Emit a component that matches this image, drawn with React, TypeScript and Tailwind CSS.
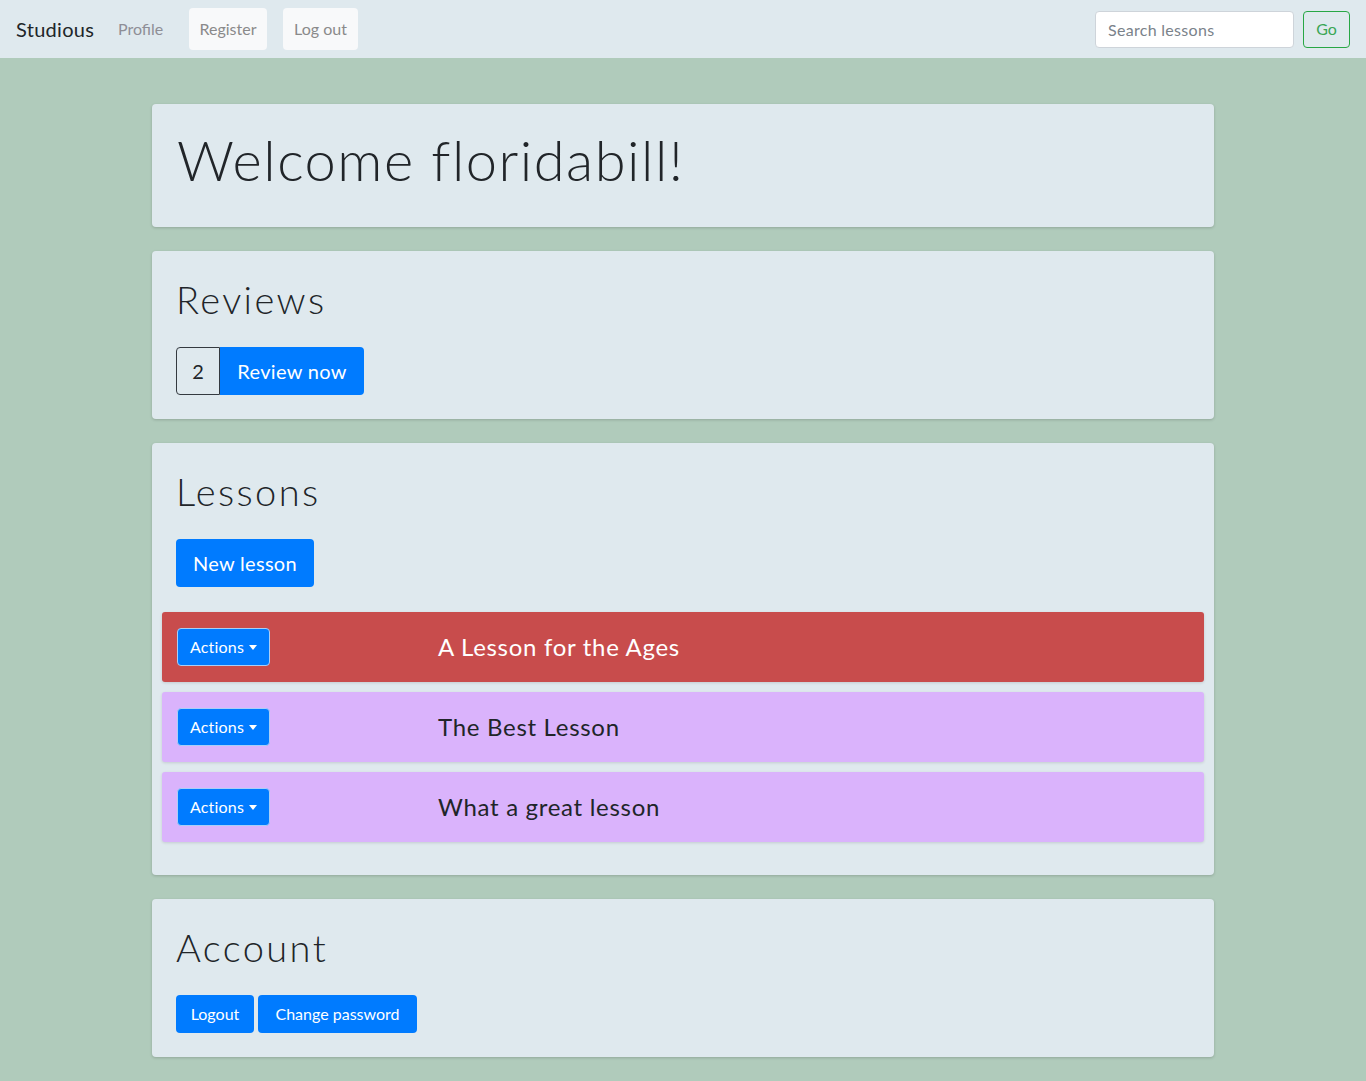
export default function App() {
  const lessons = [
    { title: "A Lesson for the Ages", bg: "bg-[#c84c4c]", text: "text-white" },
    { title: "The Best Lesson", bg: "bg-[#dab3fc]", text: "text-[#212529]" },
    { title: "What a great lesson", bg: "bg-[#dab3fc]", text: "text-[#212529]" },
  ];
  const card = "bg-[#dfe9ee] rounded-[4px] shadow-[0_1px_3px_rgba(0,0,0,0.18)]";
  const h2 = "text-[38px] leading-[46px] font-light tracking-[2.4px] text-[#212529] mb-[25px]";
  return (
    <div className="min-h-screen bg-[#b0cbbb] font-['Lato',sans-serif] text-[#212529]">
      <nav className="h-[58px] bg-[#dfe9ee] flex items-center pl-4 pr-4">
        <span className="w-[102px] text-[20px] tracking-[0.3px] text-[#212529]">Studious</span>
        <a className="w-[71px] text-[16px] text-[#8e8e96]">Profile</a>
        <button className="w-[78px] h-[42px] bg-[#f8f9fa] rounded-[4px] text-[16px] text-[#8a8a8a] mr-4">
          Register
        </button>
        <button className="w-[75px] h-[42px] bg-[#f8f9fa] rounded-[4px] text-[16px] text-[#8a8a8a]">
          Log out
        </button>
        <div className="ml-auto flex items-center gap-[9px]">
          <input
            placeholder="Search lessons"
            className="w-[199px] h-[37px] bg-white border border-[#ced4da] rounded-[4px] px-3 text-[16px] tracking-[0.3px] placeholder:text-[#7a828a] outline-none"
          />
          <button className="w-[47px] h-[37px] border border-[#28a745] text-[#3aa655] rounded-[4px] text-[16px]">
            Go
          </button>
        </div>
      </nav>

      <main className="w-[1062px] mx-auto pt-[46px] pb-[24px] flex flex-col gap-6">
        <section className={`${card} h-[123px] pl-[25px] pt-[24px]`}>
          <h1 className="text-[56px] leading-[64px] font-light tracking-[1.5px] text-[#212529]">
            Welcome floridabill!
          </h1>
        </section>

        <section className={`${card} pt-[25px] px-[24px] pb-[24px]`}>
          <h2 className={h2}>Reviews</h2>
          <div className="flex h-[48px]">
            <span className="w-[44px] h-[48px] border border-[#343a40] rounded-l-[4px] flex items-center justify-center text-[20px] text-[#212529]">
              2
            </span>
            <button className="w-[144px] h-[48px] bg-[#007bff] text-white text-[20px] tracking-[0.3px] rounded-r-[4px]">
              Review now
            </button>
          </div>
        </section>

        <section className={`${card} pt-[25px] pb-[33px]`}>
          <div className="px-[24px]">
            <h2 className={h2}>Lessons</h2>
            <button className="w-[138px] h-[48px] bg-[#007bff] text-white text-[20px] tracking-[0.3px] rounded-[4px]">
              New lesson
            </button>
          </div>
          <div className="px-[10px] mt-[25px] flex flex-col gap-[10px]">
            {lessons.map((l) => (
              <div
                key={l.title}
                className={`${l.bg} h-[70px] rounded-[3px] shadow-[0_1px_3px_rgba(0,0,0,0.12)] flex items-center`}
              >
                <div className="w-[276px] pl-[15px]">
                  <button className="w-[93px] h-[38px] bg-[#007bff] border border-[#a8cff8] rounded-[4px] text-white text-[16px] tracking-[0.2px] flex items-center justify-center">
                    Actions
                    <span className="ml-[5px] w-0 h-0 border-x-[4px] border-x-transparent border-t-[5px] border-t-white" />
                  </button>
                </div>
                <span className={`text-[24px] tracking-[0.7px] ${l.text}`}>{l.title}</span>
              </div>
            ))}
          </div>
        </section>

        <section className={`${card} pt-[25px] px-[24px] pb-[24px]`}>
          <h2 className={h2}>Account</h2>
          <div className="flex gap-[4px]">
            <button className="w-[78px] h-[38px] bg-[#007bff] text-white text-[16px] rounded-[4px]">Logout</button>
            <button className="w-[159px] h-[38px] bg-[#007bff] text-white text-[16px] rounded-[4px]">
              Change password
            </button>
          </div>
        </section>
      </main>
    </div>
  );
}
